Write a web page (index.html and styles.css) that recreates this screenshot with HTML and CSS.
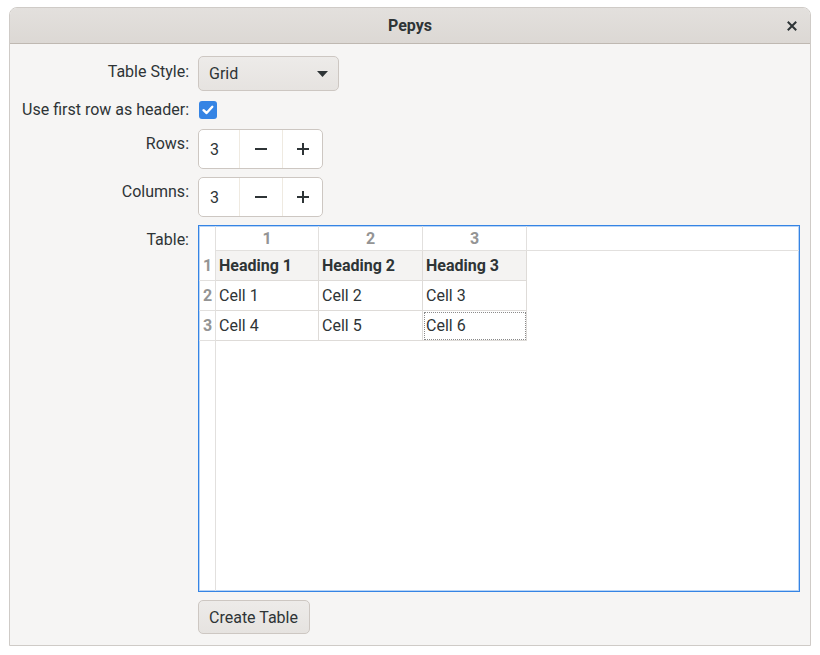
FILE: index.html
```html
<!DOCTYPE html>
<html lang="en">
<head>
<meta charset="utf-8">
<title>Pepys</title>
<link rel="stylesheet" href="styles.css">
</head>
<body>
<div class="window">
  <header class="titlebar">
    <span class="title">Pepys</span>
    <span class="close" aria-label="Close">
      <svg width="10" height="10" viewBox="0 0 10 10"><path d="M1.5 1.5 L8.5 8.5 M8.5 1.5 L1.5 8.5" stroke="#2e3436" stroke-width="2" stroke-linecap="square"/></svg>
    </span>
  </header>
  <main class="form">
    <label class="lbl lbl-combo">Table Style:</label>
    <div class="combo">
      <span>Grid</span>
      <svg class="arrow" width="11" height="6" viewBox="0 0 11 6"><path d="M0 0 H11 L5.5 6 Z" fill="#2e3436"/></svg>
    </div>

    <label class="lbl lbl-check">Use first row as header:</label>
    <div class="check-row">
      <span class="checkbox">
        <svg width="18" height="18" viewBox="0 0 18 18"><path d="M4.5 9.2 L7.6 12 L13.3 5.8" stroke="#fff" stroke-width="2.4" fill="none" stroke-linecap="round" stroke-linejoin="round"/></svg>
      </span>
    </div>

    <label class="lbl">Rows:</label>
    <div class="spin">
      <span class="spin-value">3</span>
      <span class="spin-btn" aria-label="minus"><svg width="12" height="12" viewBox="0 0 12 12"><path d="M0 6 H12" stroke="#2e3436" stroke-width="2"/></svg></span>
      <span class="spin-btn" aria-label="plus"><svg width="12" height="12" viewBox="0 0 12 12"><path d="M0 6 H12 M6 0 V12" stroke="#2e3436" stroke-width="2"/></svg></span>
    </div>

    <label class="lbl">Columns:</label>
    <div class="spin">
      <span class="spin-value">3</span>
      <span class="spin-btn" aria-label="minus"><svg width="12" height="12" viewBox="0 0 12 12"><path d="M0 6 H12" stroke="#2e3436" stroke-width="2"/></svg></span>
      <span class="spin-btn" aria-label="plus"><svg width="12" height="12" viewBox="0 0 12 12"><path d="M0 6 H12 M6 0 V12" stroke="#2e3436" stroke-width="2"/></svg></span>
    </div>

    <label class="lbl">Table:</label>
    <div class="sheet">
      <div class="corner"></div>
      <div class="colh">1</div>
      <div class="colh">2</div>
      <div class="colh">3</div>
      <div class="colh-fill"></div>

      <div class="rowh">1</div>
      <div class="cell head">Heading 1</div>
      <div class="cell head">Heading 2</div>
      <div class="cell head">Heading 3</div>
      <div class="fill"></div>

      <div class="rowh">2</div>
      <div class="cell">Cell 1</div>
      <div class="cell">Cell 2</div>
      <div class="cell">Cell 3</div>
      <div class="fill"></div>

      <div class="rowh">3</div>
      <div class="cell">Cell 4</div>
      <div class="cell">Cell 5</div>
      <div class="cell focus">Cell 6</div>
      <div class="fill"></div>

      <div class="rowh-rest"></div>
    </div>

    <span></span>
    <div class="actions"><button class="btn">Create Table</button></div>
  </main>
</div>
</body>
</html>
```

FILE: styles.css
```css
* { box-sizing: border-box; }

html, body {
  margin: 0;
  padding: 0;
  background: #ffffff;
}

body {
  font-family: Roboto, "Noto Sans", sans-serif;
  font-size: 16px;
  color: #2e3436;
  padding: 7px 0 0 9px;
}

.window {
  width: 802px;
  height: 639px;
  border: 1px solid #cfcbc7;
  border-radius: 8px 8px 0 0;
  background: #f6f5f4;
  display: flex;
  flex-direction: column;
  overflow: hidden;
}

.titlebar {
  height: 36px;
  flex: none;
  background: linear-gradient(#e3e0dd, #dcd8d4);
  border-bottom: 1px solid #bfb8b1;
  display: flex;
  align-items: center;
  justify-content: center;
  position: relative;
}

.title {
  font-weight: 700;
  font-size: 16px;
  color: #2e3436;
}

.close {
  position: absolute;
  right: 13px;
  top: 13px;
  width: 10px;
  height: 10px;
  display: flex;
}

.form {
  display: grid;
  grid-template-columns: 180px 602px;
  column-gap: 8px;
  row-gap: 8px;
  grid-template-rows: 35px 22px 40px 40px 367px 34px;
  padding: 12px 0 0 0;
}

.lbl {
  text-align: right;
  line-height: 20px;
  padding-top: 5px;
  padding-right: 1px;
  white-space: nowrap;
}

.lbl-combo { padding-top: 6px; }
.lbl-check { padding-top: 1px; }

.combo {
  width: 141px;
  height: 35px;
  border: 1px solid #cdc7c2;
  border-radius: 5px;
  background: linear-gradient(#edebe9, #e6e3e0);
  display: flex;
  align-items: center;
  justify-content: space-between;
  padding: 0 10px 0 10px;
}

.arrow { margin-top: 1px; }

.check-row {
  display: flex;
  align-items: center;
  padding-left: 1px;
}

.checkbox {
  width: 18px;
  height: 18px;
  border-radius: 3px;
  background: #3584e4;
  display: flex;
}

.spin {
  width: 125px;
  height: 40px;
  border: 1px solid #cdc7c2;
  border-radius: 5px;
  background: #ffffff;
  display: grid;
  grid-template-columns: 41px 42px 1fr;
}

.spin-value {
  display: flex;
  align-items: center;
  padding-left: 11px;
  border-right: 1px solid #efeae1;
}

.spin-btn {
  display: flex;
  align-items: center;
  justify-content: center;
}

.spin-btn + .spin-btn {
  border-left: 1px solid #efeae1;
}

.sheet {
  width: 602px;
  height: 367px;
  border: 1px solid #3584e4;
  box-shadow: inset 0 0 0 1px rgba(53, 132, 228, 0.35);
  background: #ffffff;
  display: grid;
  grid-template-columns: 17px 103px 104px 104px 1fr;
  grid-template-rows: 25px 30px 30px 30px 1fr;
  font-size: 16px;
}

.corner {
  border-right: 1px solid #e2e0de;
}

.colh {
  border-right: 1px solid #e2e0de;
  border-bottom: 1px solid #e2e0de;
  color: #949494;
  font-weight: 700;
  display: flex;
  align-items: center;
  justify-content: center;
  padding-top: 1px;
}

.colh-fill {
  border-bottom: 1px solid #e2e0de;
}

.rowh {
  border-right: 1px solid #e2e0de;
  border-bottom: 1px solid #e2e0de;
  color: #949494;
  font-weight: 700;
  display: flex;
  align-items: center;
  justify-content: center;
  padding-left: 1px;
}

.cell {
  border-right: 1px solid #dedbd8;
  border-bottom: 1px solid #dedbd8;
  display: flex;
  align-items: center;
  padding-left: 3px;
  white-space: nowrap;
}

.cell.head {
  background: #f4f3f2;
  font-weight: 700;
}

.cell.focus {
  outline: 1px dotted #8a8a8a;
  outline-offset: -2px;
}

.rowh-rest {
  border-right: 1px solid #e2e0de;
}

.actions {
  display: flex;
}

.btn {
  font: inherit;
  color: #2e3436;
  height: 34px;
  width: 112px;
  border: 1px solid #cdc7c2;
  border-radius: 5px;
  background: linear-gradient(#edebe9, #e6e3e0);
  padding: 0 10px;
  text-align: left;
}
```
